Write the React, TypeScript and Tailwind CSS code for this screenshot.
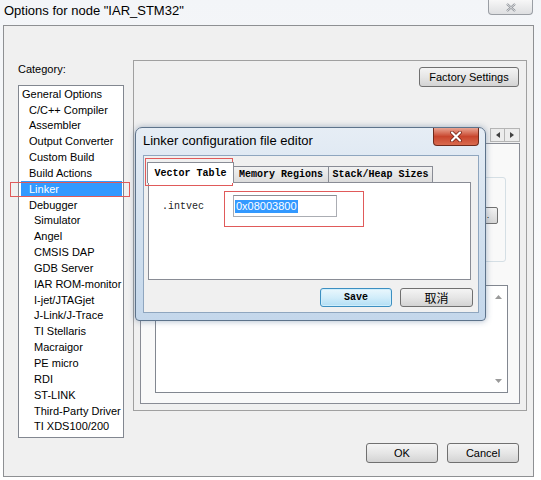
import React from "react";

/** ---------- DATA ---------- */
// [label, indent level]
const categories: [string, number][] = [
    ["General Options", 0],
    ["C/C++ Compiler", 1],
    ["Assembler", 1],
    ["Output Converter", 1],
    ["Custom Build", 1],
    ["Build Actions", 1],
    ["Linker", 1],
    ["Debugger", 1],
    ["Simulator", 2],
    ["Angel", 2],
    ["CMSIS DAP", 2],
    ["GDB Server", 2],
    ["IAR ROM-monitor", 2],
    ["I-jet/JTAGjet", 2],
    ["J-Link/J-Trace", 2],
    ["TI Stellaris", 2],
    ["Macraigor", 2],
    ["PE micro", 2],
    ["RDI", 2],
    ["ST-LINK", 2],
    ["Third-Party Driver", 2],
    ["TI XDS100/200", 2],
];

const indent: Record<number, string> = {
    0: "pl-[3px]",
    1: "pl-[10px]",
    2: "pl-[15px]",
};

const ui = "font-['Liberation_Sans',Arial,sans-serif]";
const mono = "font-['Liberation_Mono','Courier_New',monospace] font-bold";

// Win7 push button
const btn =
    "flex items-center justify-center rounded-[3px] border border-[#707070] bg-linear-to-b from-[#f4f4f4] via-[#e6e6e6] to-[#d3d3d3] text-[11px] text-black";

/** ---------- SMALL PIECES ---------- */
const Arrow = ({ dir }: { dir: "l" | "r" | "u" | "d" }) => {
    const pts = {
        l: "5,1 1,4 5,7",
        r: "1,1 5,4 1,7",
        u: "0,5 3.5,1 7,5",
        d: "0,1 3.5,5 7,1",
    }[dir];
    return (
        <svg width={dir === "u" || dir === "d" ? 7 : 6} height={dir === "u" || dir === "d" ? 6 : 8}>
            <polygon points={pts} fill={dir === "u" || dir === "d" ? "#9a9a9a" : "#404040"} />
        </svg>
    );
};

const CloseGray = () => (
    <svg width="10" height="9" viewBox="0 0 10 9">
        <path d="M1 1 L9 8 M9 1 L1 8" stroke="#8a8f96" strokeWidth="2.2" />
        <path d="M1 1 L9 8 M9 1 L1 8" stroke="#f2f2f2" strokeWidth="0.8" />
    </svg>
);

const CloseRed = () => (
    <svg width="12" height="11" viewBox="0 0 12 11">
        <path d="M2 1.5 L10 9.5 M10 1.5 L2 9.5" stroke="#6b1a0e" strokeWidth="3.6" strokeLinecap="round" />
        <path d="M2 1.5 L10 9.5 M10 1.5 L2 9.5" stroke="#ffffff" strokeWidth="2.2" strokeLinecap="round" />
    </svg>
);

/** ---------- LINKER DIALOG (modal over the options window) ---------- */
function LinkerDialog() {
    return (
        <div className="absolute left-[135px] top-[127px] flex h-[194px] w-[351px] flex-col rounded-t-[7px] rounded-b-[4px] border border-[#5d738b] bg-linear-to-b from-[#e6edf5] via-[#d3e1ef] to-[#c4d7eb] shadow-[0_0_6px_rgba(60,90,130,0.45)]">
            {/* title row */}
            <div className="flex h-[27px] items-start">
                <span className={`${ui} pl-[7px] pt-[5px] text-[13px] leading-[16px] text-black`}>
                    Linker configuration file editor
                </span>
                <div className="ml-auto mr-[6px] flex h-[18px] w-[46px] items-center justify-center rounded-b-[4px] border border-t-0 border-[#6e2a1c] bg-linear-to-b from-[#e8a493] via-[#c8452d] to-[#d96a4e]">
                    <CloseRed />
                </div>
            </div>

            {/* client */}
            <div className="ml-[7px] mr-[6px] h-[158px] border border-[#8fa6bf] bg-[#f0f0f0]">
                {/* tabs */}
                <div className="flex h-[26px] items-end pl-[3px]">
                    <div className={`${mono} relative z-10 mb-[-1px] flex h-[21px] w-[87px] items-center justify-center border border-b-0 border-[#898c95] bg-white text-[10px] text-black`}>
                        Vector Table
                    </div>
                    <div className={`${mono} flex h-[16px] w-[95px] items-center justify-center border border-b-0 border-l-0 border-[#898c95] bg-linear-to-b from-[#f2f2f2] to-[#dcdcdc] text-[10px] text-black`}>
                        Memory Regions
                    </div>
                    <div className={`${mono} flex h-[16px] w-[104px] items-center justify-center border border-b-0 border-l-0 border-[#898c95] bg-linear-to-b from-[#f2f2f2] to-[#dcdcdc] text-[10px] text-black`}>
                        Stack/Heap Sizes
                    </div>
                </div>

                {/* tab page */}
                <div className="ml-[4px] h-[98px] w-[323px] border border-[#898c95] bg-white">
                    <div className="mt-[12px] flex h-[22px] items-center">
                        <span className={`${mono} ml-[13px] w-[71px] text-[10px] font-normal text-[#222]`}>.intvec</span>
                        <div className="flex h-[22px] w-[104px] items-center border border-[#abadb3] border-t-[#8a8d94] bg-white pl-px">
                            <span className={`${ui} bg-[#3399ff] px-px text-[11px] leading-[13px] text-white`}>0x08003800</span>
                        </div>
                    </div>
                </div>

                {/* buttons */}
                <div className="mt-[8px] flex justify-end gap-[8px] pr-[5px]">
                    <div className={`${mono} flex h-[19px] w-[72px] items-center justify-center rounded-[3px] border border-[#3c8fc1] bg-linear-to-b from-[#eaf7fd] via-[#d2edfa] to-[#b2def4] text-[10px] text-black shadow-[inset_0_0_0_1px_#cfeefc]`}>
                        Save
                    </div>
                    <div className={`${btn} h-[19px] w-[73px] font-['Noto_Sans_CJK_SC',sans-serif] text-[12px]`}>
                        取消
                    </div>
                </div>
            </div>
        </div>
    );
}

/** ---------- APP ---------- */
export default function App() {
    return (
        <div className={`${ui} relative h-[480px] w-[541px] overflow-hidden bg-linear-to-b from-[#f3f5f8] to-[#ffffff]`}>
            {/* title bar */}
            <div className="flex h-[25px] items-start">
                <span className="pl-[4px] pt-[3px] text-[13px] leading-[16px] text-black">
                    Options for node "IAR_STM32"
                </span>
                <div className="ml-auto mr-[8px] flex h-[15px] w-[45px] items-center justify-center rounded-b-[4px] border border-t-0 border-[#9a9ea4] bg-linear-to-b from-[#f7f7f7] to-[#dedfe1]">
                    <CloseGray />
                </div>
            </div>

            {/* client area */}
            <div className="ml-[3px] flex h-[452px] w-[531px] items-start border border-[#8e9093] bg-[#f0f0f0]">
                {/* category column */}
                <div className="w-[129px] pl-[14px] pt-[35px]">
                    <div className="h-[16px] text-[11px] leading-[16px] text-black">Category:</div>
                    <div className="mt-[8px] h-[353px] w-[106px] border border-[#828790] bg-white">
                        {categories.map(([name, lvl]) =>
                            name === "Linker" ? (
                                <div
                                    key={name}
                                    className="ml-[2px] mr-px flex h-[15.85px] items-center bg-[#3399ff] pl-[8px] text-[11px] text-white"
                                >
                                    {name}
                                </div>
                            ) : (
                                <div
                                    key={name}
                                    className={`flex h-[15.85px] items-center whitespace-nowrap text-[11px] text-black ${indent[lvl]}`}
                                >
                                    {name}
                                </div>
                            )
                        )}
                    </div>
                </div>

                {/* options panel + OK / Cancel */}
                <div className="w-[394px] pt-[34px]">
                    <div className="flex h-[351px] flex-col border border-[#a0a0a0]">
                        <div className="flex justify-end pr-[7px] pt-[6px]">
                            <div className={`${btn} h-[20px] w-[100px]`}>Factory Settings</div>
                        </div>

                        {/* tab strip (tabs are hidden under the dialog) */}
                        <div className="mt-[41px] flex h-[15px] items-start justify-end pr-[6px]">
                            <div className="flex h-[14px] w-[15px] items-center justify-center border border-[#b5b5b5] bg-[#ececec]">
                                <Arrow dir="l" />
                            </div>
                            <div className="flex h-[14px] w-[15px] items-center justify-center border border-l-0 border-[#b5b5b5] bg-[#ececec]">
                                <Arrow dir="r" />
                            </div>
                        </div>

                        {/* tab page */}
                        <div className="mx-[6px] h-[261px] border border-[#898c95] bg-[#f9f9f9]">
                            <div className="ml-[14px] mr-[13px] mt-[33px] h-[85px] rounded-[3px] border border-[#d5dfe5]">
                                <div className="flex justify-end pr-[7px] pt-[29px]">
                                    <div className="flex h-[17px] w-[20px] items-center justify-center rounded-[2px] border border-[#707070] bg-linear-to-b from-[#f2f2f2] to-[#d6d6d6] text-[9px] leading-none">
                                        .
                                    </div>
                                </div>
                            </div>
                            <div className="ml-[14px] mr-[11px] mt-[23px] flex h-[108px] border border-[#828790] bg-white">
                                <div className="flex-1" />
                                <div className="flex w-[17px] flex-col items-center justify-between py-[8px]">
                                    <Arrow dir="u" />
                                    <Arrow dir="d" />
                                </div>
                            </div>
                        </div>
                    </div>

                    <div className="mt-[32px] flex justify-end gap-[9px] pr-[8px]">
                        <div className={`${btn} h-[20px] w-[72px]`}>OK</div>
                        <div className={`${btn} h-[20px] w-[72px]`}>Cancel</div>
                    </div>
                </div>
            </div>

            <LinkerDialog />

            {/* red annotation boxes drawn over the screenshot */}
            <div className="absolute left-[10px] top-[182px] h-[15px] w-[120px] border border-[#e05a5a]" />
            <div className="absolute left-[145px] top-[158px] h-[28px] w-[88px] border border-[#e05a5a]" />
            <div className="absolute left-[224px] top-[191px] h-[36px] w-[140px] border border-[#e05a5a]" />
        </div>
    );
}
